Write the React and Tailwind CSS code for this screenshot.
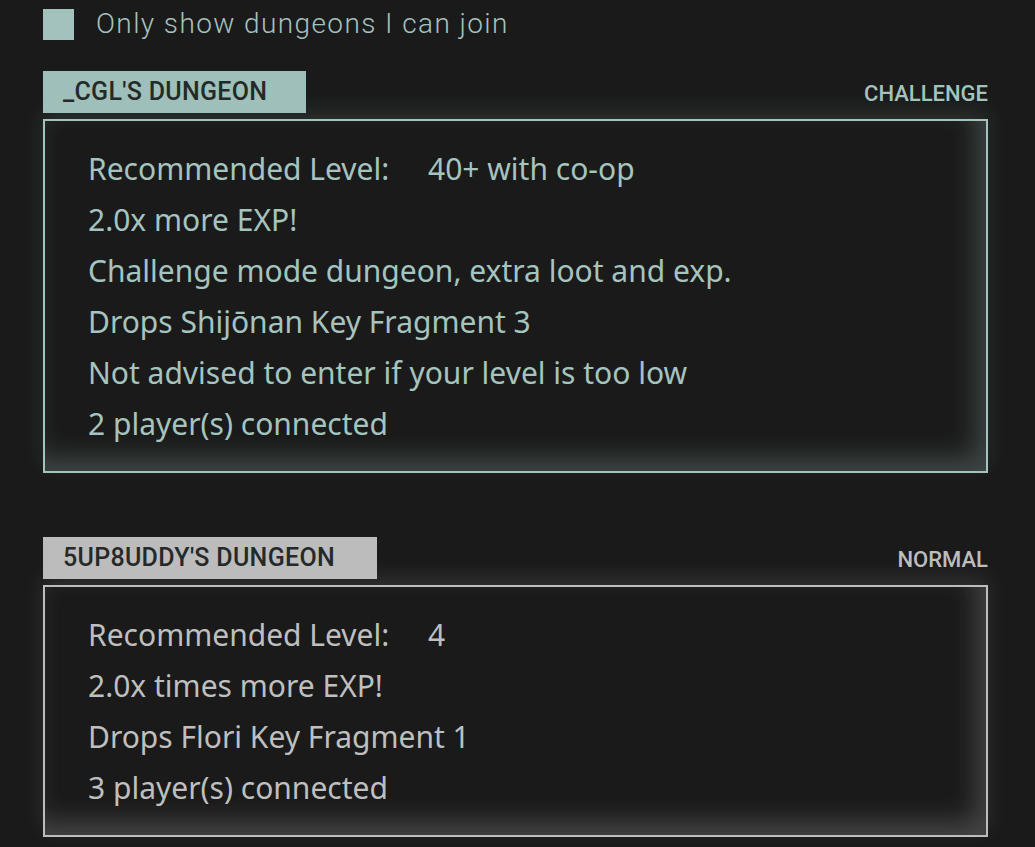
import React from 'react';

const dungeons = [
    {
        owner: "_CGL'S DUNGEON",
        mode: 'CHALLENGE',
        theme: 'teal',
        lines: [
            ['Recommended Level:', '40+ with co-op'],
            '2.0x more EXP!',
            'Challenge mode dungeon, extra loot and exp.',
            'Drops Shijōnan Key Fragment 3',
            'Not advised to enter if your level is too low',
            '2 player(s) connected',
        ],
    },
    {
        owner: "5UP8UDDY'S DUNGEON",
        mode: 'NORMAL',
        theme: 'grey',
        lines: [
            ['Recommended Level:', '4'],
            '2.0x times more EXP!',
            'Drops Flori Key Fragment 1',
            '3 player(s) connected',
        ],
    },
];

const styles = {
    teal: {
        tab: 'bg-[#9fbfba] w-[263px]',
        mode: 'text-[#a3c3be]',
        box: 'border-[#a3c3be] shadow-[inset_-10px_-14px_26px_rgba(150,185,180,0.28),0_-8px_20px_rgba(150,185,180,0.14)]',
        text: 'text-[#a5c4bf]',
    },
    grey: {
        tab: 'bg-[#bcbcbc] w-[334px]',
        mode: 'text-[#bdbdbd]',
        box: 'border-[#bdbdbd] shadow-[inset_-10px_-14px_26px_rgba(190,190,190,0.26),0_-8px_20px_rgba(190,190,190,0.14)]',
        text: 'text-[#bfbfbf]',
    },
};

const labelFont = { fontFamily: 'Roboto, "Liberation Sans", sans-serif' };

const DungeonCard = ({ dungeon }) => {
    const s = styles[dungeon.theme];
    return (
        <div>
            {/* tab row */}
            <div className="flex items-end justify-between h-[42px] mb-[6px]">
                <div className={`${s.tab} h-[42px] flex items-center pl-[20px] text-[#252a28] text-[25px] font-medium tracking-[0.3px]`} style={labelFont}>
                    {dungeon.owner}
                </div>
                <div className={`${s.mode} text-[22px] font-medium mb-[3px]`} style={labelFont}>
                    {dungeon.mode}
                </div>
            </div>
            <div className={`border-2 ${s.box} px-[43px] py-[22px]`}>
                {dungeon.lines.map((line, i) => (
                    <div key={i} className={`${s.text} text-[30px] leading-[51px] flex`}>
                        {Array.isArray(line) ? (
                            <>
                                <span className="w-[340px]">{line[0]}</span>
                                <span>{line[1]}</span>
                            </>
                        ) : line}
                    </div>
                ))}
            </div>
        </div>
    );
};

export default function App() {
    return (
        <div className="w-[1035px] h-[847px] bg-[#1a1a1a] overflow-hidden pl-[43px] pr-[47px]" style={{ fontFamily: '"Noto Sans", "Open Sans", sans-serif' }}>
            <div className="flex items-center h-[47px] pt-[1px]">
                <div className="w-[31px] h-[31px] bg-[#a3c2bd]" />
                <span className="ml-[22px] text-[28px] font-light tracking-[1.4px] text-[#a5c2be]" style={{ fontFamily: 'Roboto, sans-serif' }}>
                    Only show dungeons I can join
                </span>
            </div>
            <div className="flex flex-col gap-[64px] mt-[24px]">
                {dungeons.map((d) => (
                    <DungeonCard key={d.owner} dungeon={d} />
                ))}
            </div>
        </div>
    );
}
